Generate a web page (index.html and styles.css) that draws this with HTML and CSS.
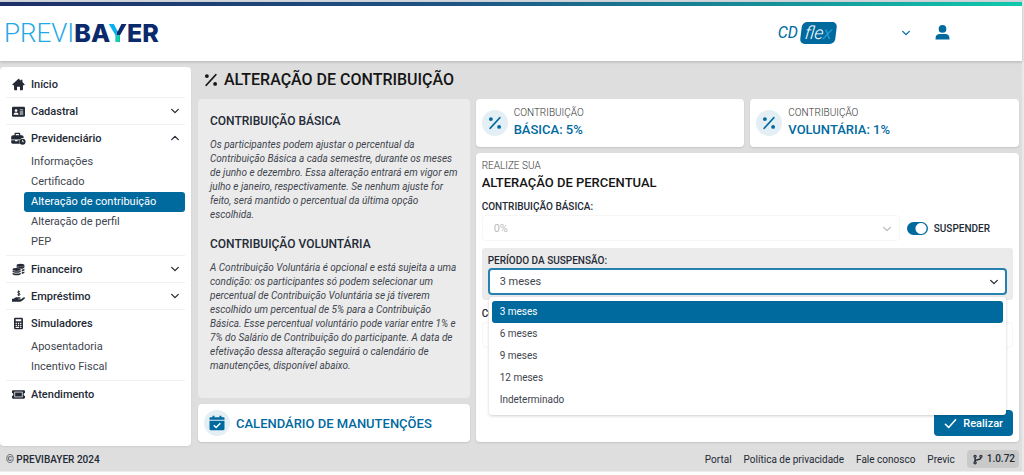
FILE: index.html
```html
<!DOCTYPE html>
<html lang="pt-BR">
<head>
<meta charset="utf-8">
<meta name="viewport" content="width=device-width, initial-scale=1">
<title>Previbayer - Alteração de contribuição</title>
<link rel="stylesheet" href="styles.css">
</head>
<body>
<svg class="sprite" aria-hidden="true">
  <symbol id="chevron" viewBox="0 0 10 10"><path d="M1.700 3.400 5 6.600l3.300-3.200" fill="none" stroke="currentColor" stroke-width="1.300" stroke-linecap="round" stroke-linejoin="round"/></symbol>
  <symbol id="percent" viewBox="0 0 16 16"><path d="M2.500 14 13.500 2" stroke="currentColor" stroke-width="2" stroke-linecap="round"/><circle cx="3.300" cy="3.500" r="2.200" fill="currentColor"/><circle cx="12.700" cy="12.500" r="2.200" fill="currentColor"/></symbol>
</svg>
<div class="page">
  <header class="header">
    <a class="logo" href="#" aria-label="Previbayer"><span class="logo-light">PREVI</span><span class="logo-bold">BA<span class="logo-y">Y</span>ER</span></a>
    <div class="account">
      <a class="plan" href="#" aria-label="CD flex"><span>CD</span><span class="plan-tag">fle<span class="plan-x">x</span></span></a>
      <button class="icon-button" type="button" aria-label="Trocar plano"><svg class="chevron"><use href="#chevron"/></svg></button>
      <button class="icon-button" type="button" aria-label="Usuário"><svg class="user" viewBox="0 0 16 16" fill="currentColor"><circle cx="8" cy="4.200" r="4.100"/><path d="M.6 15.500v-1.700c0-2.300 2-4.100 4.400-4.100h6c2.400 0 4.400 1.800 4.400 4.100v1.700z"/></svg></button>
    </div>
  </header>

  <div class="layout">
    <nav class="sidebar" aria-label="Menu principal">
      <section class="menu">
        <a class="menu-head" href="#"><svg class="menu-icon" viewBox="0 0 16 16" fill="currentColor"><path d="M8 1 .6 7.800c-.4.500-.1 1.100.5 1.100h1.400v5c0 .7.500 1.100 1.100 1.100h2.600v-4.200h3.600V15h2.600c.7 0 1.100-.4 1.100-1.100v-5h1.400c.6 0 .9-.6.500-1.100L12.800 5V2.200h-2v1.200L8.700 1.300z"/></svg><span>Início</span></a>
      </section>
      <section class="menu">
        <a class="menu-head" href="#"><svg class="menu-icon" viewBox="0 0 16 16"><rect x="0" y="2" width="16" height="12.500" rx="1.600" fill="currentColor"/><g fill="#fff"><circle cx="5" cy="6.800" r="1.700"/><path d="M2 12c0-1.800 1.200-2.700 3-2.700S8 10.200 8 12z"/><path d="M9.500 5.400h4.300v1.200H9.500zM9.500 8h4.300v1.200H9.500zM9.500 10.600h4.300v1.200H9.500z"/></g></svg><span>Cadastral</span><svg class="chevron"><use href="#chevron"/></svg></a>
      </section>
      <section class="menu">
        <a class="menu-head" href="#"><svg class="menu-icon menu-icon-wide" viewBox="0 0 18 16"><path d="M0 6.500C0 5 1 4 2.300 4H4V2.500C4 1.600 4.700 1 5.600 1h4c.9 0 1.600.6 1.600 1.500V4H13c1.300 0 2.300 1 2.300 2.300v1.300c-1.500-.3-3.200.4-4.200 1.600H0zM5.600 4h4V2.600h-4zM0 10.300h4.800v1.200h3v-1.200h2.600c-.4 1.200-.3 3 .3 4.100H1.800C.7 14.400 0 13.600 0 12.600z" fill="currentColor" fill-rule="evenodd"/><circle cx="14" cy="12" r="3.700" fill="currentColor"/><path d="M14 9.700V12h1.600" fill="none" stroke="#fff" stroke-width="1"/></svg><span>Previdenciário</span><svg class="chevron chevron-up"><use href="#chevron"/></svg></a>
        <div class="submenu">
          <a href="#">Informações</a>
          <a href="#">Certificado</a>
          <a class="active" href="#" aria-current="page">Alteração de contribuição</a>
          <a href="#">Alteração de perfil</a>
          <a href="#">PEP</a>
        </div>
      </section>
      <section class="menu">
        <a class="menu-head" href="#"><svg class="menu-icon" viewBox="0 0 16 16" fill="currentColor"><ellipse cx="10.500" cy="2.700" rx="4.800" ry="1.900"/><path d="M5.700 3.800c1.500 1.400 8.100 1.400 9.600 0v1.500c0 1.100-1.900 1.800-4 1.900-1-.9-3-1.500-5.600-1.500zM12 8.200c1.400-.1 2.600-.5 3.300-1v1.500c0 .8-1.400 1.500-3.300 1.700zM12 11.400c1.400-.1 2.600-.5 3.300-1v1.400c0 .8-1.400 1.500-3.300 1.700z"/><ellipse cx="5.700" cy="8" rx="5" ry="1.800"/><path d="M.7 9.100c1.800 1.400 8.200 1.400 10 0v1.300c0 2-10 2-10 0zM.7 12c1.800 1.400 8.200 1.400 10 0v1.600c0 2-10 2-10 0z"/></svg><span>Financeiro</span><svg class="chevron"><use href="#chevron"/></svg></a>
      </section>
      <section class="menu">
        <a class="menu-head" href="#"><svg class="menu-icon" viewBox="0 0 16 16" fill="currentColor"><path d="M9.800 2.200C8.900 1.500 7 1.400 6.900 2.700c0 1.500 3 .9 3 2.500C9.800 6.700 7.600 6.500 6.700 5.700M8.300.5v7" fill="none" stroke="currentColor" stroke-width="1.200"/><path d="M0 10.700h2.200l1.400-1.100c.6-.5 1.200-.7 1.900-.7h4.200c1.200 0 1.200 1.800 0 1.800H7.500v.6h3.600l2.900-2.100c1.200-.8 2.500.7 1.500 1.600l-3.900 3.100c-.5.400-1 .6-1.700.6H0z"/></svg><span>Empréstimo</span><svg class="chevron"><use href="#chevron"/></svg></a>
      </section>
      <section class="menu">
        <a class="menu-head" href="#"><svg class="menu-icon" viewBox="0 0 16 16"><rect x="2.500" y="1" width="11" height="14" rx="1.500" fill="currentColor"/><path d="M4.500 2.900h7v2.200h-7zM4.500 7h1.500v1.500H4.500zM7.300 7h1.500v1.500H7.300zM10 7h1.500v1.500H10zM4.500 9.600h1.500v1.500H4.500zM7.300 9.600h1.500v1.500H7.300zM10 9.600h1.500v1.500H10zM4.500 12.100h4.300v1.300H4.500zM10 12.100h1.500v1.300H10z" fill="#fff"/></svg><span>Simuladores</span></a>
        <div class="submenu">
          <a href="#">Aposentadoria</a>
          <a href="#">Incentivo Fiscal</a>
        </div>
      </section>
      <section class="menu">
        <a class="menu-head" href="#"><svg class="menu-icon" viewBox="0 0 16 16"><path d="M1.500 2.800h13c.9 0 1.500.6 1.500 1.400v2.100a1.700 1.700 0 0 0 0 3.400v2.100c0 .8-.6 1.400-1.500 1.400h-13c-.9 0-1.500-.6-1.500-1.400V9.700a1.700 1.700 0 0 0 0-3.400V4.200c0-.8.600-1.400 1.500-1.400z" fill="currentColor"/><rect x="3.400" y="5" width="9.200" height="6" fill="none" stroke="#fff" stroke-width=".9"/></svg><span>Atendimento</span></a>
      </section>
    </nav>

    <main class="main">
      <h1 class="title"><svg class="title-icon"><use href="#percent"/></svg>ALTERAÇÃO DE CONTRIBUIÇÃO</h1>
      <div class="columns">
        <div class="column">
          <article class="info">
            <h2>CONTRIBUIÇÃO BÁSICA</h2>
            <p>Os participantes podem ajustar o percentual da Contribuição Básica a cada semestre, durante os meses de junho e dezembro. Essa alteração entrará em vigor em julho e janeiro, respectivamente. Se nenhum ajuste for feito, será mantido o percentual da última opção escolhida.</p>
            <h2>CONTRIBUIÇÃO VOLUNTÁRIA</h2>
            <p>A Contribuição Voluntária é opcional e está sujeita a uma condição: os participantes só podem selecionar um percentual de Contribuição Voluntária se já tiverem escolhido um percentual de 5% para a Contribuição Básica. Esse percentual voluntário pode variar entre 1% e 7% do Salário de Contribuição do participante. A data de efetivação dessa alteração seguirá o calendário de manutenções, disponível abaixo.</p>
          </article>
          <a class="card calendar" href="#">
            <span class="badge"><svg class="badge-icon-large" viewBox="0 0 16 16"><path d="M1.500 2.200h2V.8h2v1.400h5V.8h2v1.400h2c.6 0 1 .4 1 1v1.600H.5V3.200c0-.6.400-1 1-1zM.5 5.700h15v8.400c0 .7-.5 1.200-1.200 1.200H1.700c-.7 0-1.200-.5-1.200-1.200z" fill="currentColor"/><path d="m4.800 10.300 2.300 2.200 4.200-4.200" fill="none" stroke="#fff" stroke-width="1.500"/></svg></span>
            <span>CALENDÁRIO DE MANUTENÇÕES</span>
          </a>
        </div>

        <div class="column">
          <div class="summary">
            <div class="card summary-card">
              <span class="badge"><svg class="badge-icon"><use href="#percent"/></svg></span>
              <div><div class="eyebrow">CONTRIBUIÇÃO</div><div class="value">BÁSICA: 5%</div></div>
            </div>
            <div class="card summary-card">
              <span class="badge"><svg class="badge-icon"><use href="#percent"/></svg></span>
              <div><div class="eyebrow">CONTRIBUIÇÃO</div><div class="value">VOLUNTÁRIA: 1%</div></div>
            </div>
          </div>

          <form class="card form">
            <div class="eyebrow">REALIZE SUA</div>
            <h2 class="form-title">ALTERAÇÃO DE PERCENTUAL</h2>
            <label class="label" for="basica">CONTRIBUIÇÃO BÁSICA:</label>
            <div class="row">
              <div class="field disabled">
                <select id="basica" disabled><option>0%</option></select>
                <svg class="chevron field-chevron"><use href="#chevron"/></svg>
              </div>
              <label class="toggle"><input type="checkbox" role="switch" checked>SUSPENDER</label>
            </div>
            <div class="period">
              <label class="label" for="periodo">PERÍODO DA SUSPENSÃO:</label>
              <div class="field focused">
                <select id="periodo"><option>3 meses</option><option>6 meses</option><option>9 meses</option><option>12 meses</option><option>Indeterminado</option></select>
                <svg class="chevron field-chevron"><use href="#chevron"/></svg>
                <div class="dropdown" role="listbox" aria-label="Período da suspensão">
                  <button type="button" role="option" aria-selected="true">3 meses</button>
                  <button type="button" role="option" aria-selected="false">6 meses</button>
                  <button type="button" role="option" aria-selected="false">9 meses</button>
                  <button type="button" role="option" aria-selected="false">12 meses</button>
                  <button type="button" role="option" aria-selected="false">Indeterminado</button>
                </div>
              </div>
            </div>
            <label class="label" for="voluntaria">CONTRIBUIÇÃO VOLUNTÁRIA:</label>
            <div class="field disabled">
              <select id="voluntaria" disabled></select>
            </div>
            <button class="submit" type="submit"><svg class="submit-icon" viewBox="0 0 14 14"><path d="m1.500 7.800 3.500 3.500L12.500 3" fill="none" stroke="currentColor" stroke-width="1.700" stroke-linecap="round" stroke-linejoin="round"/></svg>Realizar</button>
          </form>
        </div>
      </div>
    </main>
  </div>

  <footer class="footer">
    <span class="copyright">© PREVIBAYER 2024</span>
    <nav class="links" aria-label="Rodapé">
      <a href="#">Portal</a>
      <a href="#">Política de privacidade</a>
      <a href="#">Fale conosco</a>
      <a href="#">Previc</a>
      <span class="version"><svg class="branch" viewBox="0 0 12 12" fill="none" stroke="currentColor"><circle cx="2.500" cy="2.200" r="1.300" stroke-width="1.400"/><circle cx="9.500" cy="2.200" r="1.300" stroke-width="1.400"/><circle cx="2.500" cy="9.900" r="1.300" stroke-width="1.400"/><path d="M2.500 3.500v5M2.500 8C2.500 5.500 9.500 7.200 9.500 3.500" stroke-width="1.700"/></svg>1.0.72</span>
    </nav>
  </footer>
</div>
</body>
</html>
```
FILE: styles.css
```css
* { box-sizing: border-box; }

:root {
  --blue: #006a9f;
  --ink: #232a35;
  --grey: #dedede;
}

body {
  margin: 0;
  background: #fff;
  color: var(--ink);
  font-family: Roboto, "Liberation Sans", sans-serif;
  font-size: 11px;
}

h1, h2, p { margin: 0; }
a { color: inherit; text-decoration: none; }
button, select, input { font: inherit; color: inherit; }
button { border: 0; background: none; cursor: pointer; }
svg { display: block; flex: none; }
.sprite { position: absolute; width: 0; height: 0; }

.page {
  background: var(--grey);
  border-top: 2px solid #d3d6dc;
  border-right: 2px solid #e9e9e9;
  border-bottom: 1px solid #eee;
}

.chevron { width: 10px; height: 10px; }
.chevron-up { transform: rotate(180deg); }

/* Header */
.header {
  display: flex;
  align-items: center;
  justify-content: space-between;
  height: 59px;
  padding: 0 63px 2px 4px;
  background: #fff;
  border-top: 4px solid;
  border-image: linear-gradient(90deg, #1d2f66, #1e5585 45%, #168f98 75%, #10c9ac) 1;
  box-shadow: 0 1px 3px rgba(0, 0, 0, .2);
}
.logo { display: flex; align-items: center; font-size: 26px; line-height: 30px; }
.logo-light { font-weight: 300; color: #1fa9e6; }
.logo-bold { font-family: Inter, sans-serif; font-size: 25px; font-weight: 800; color: #0a2a6b; }
.logo-y {
  background: linear-gradient(180deg, transparent 56%, #12cfae 56%), linear-gradient(90deg, #0bb0ee 50%, #0a2a6b 50%);
  background-clip: text;
  -webkit-background-clip: text;
  color: transparent;
}
.account { display: flex; align-items: center; color: var(--blue); }
.plan {
  display: flex;
  align-items: center;
  gap: 3px;
  margin-right: 56px;
  font-size: 16px;
  font-style: italic;
}
.plan-tag {
  padding: 0 4px;
  border-radius: 5px;
  background: var(--blue);
  color: #fff;
  font-size: 18px;
  line-height: 22px;
  font-weight: 300;
  transform: skewX(-7deg);
}
.plan-x { color: #29a9e1; }
.icon-button { padding: 0 9px; }
.icon-button + .icon-button { margin-left: 6px; }
.user { width: 15px; height: 15px; }

/* Layout */
.layout { display: flex; gap: 7px; padding-top: 6px; }
.sidebar {
  flex: 0 0 191px;
  padding: 4px 6px;
  background: #fff;
  border-radius: 4px;
  box-shadow: 0 1px 2px rgba(0, 0, 0, .08);
}
.menu { border-bottom: 1px solid #f0f0f0; }
.menu:last-child { border-bottom: 0; }
.menu-head {
  display: flex;
  align-items: center;
  gap: 6px;
  height: 26px;
  padding: 0 5px 0 6px;
  font-weight: 500;
}
.menu-head .chevron { margin-left: auto; }
.menu-icon { width: 13px; height: 13px; }
.menu-icon-wide { width: 15px; margin: 0 -1px; }
.submenu { padding: 1px 0 3px; }
.submenu a {
  display: block;
  margin-left: 18px;
  padding-left: 7px;
  border-radius: 3px;
  line-height: 20px;
  color: #40454e;
}
.submenu .active { background: var(--blue); color: #fff; }

.main { flex: 1; min-width: 0; padding: 0 3px 4px 0; }
.title {
  display: flex;
  align-items: center;
  gap: 6px;
  padding: 0 6px 6px;
  font-size: 16px;
  line-height: 26px;
  font-weight: 500;
  color: #151515;
}
.title-icon { width: 14px; height: 14px; }
.columns { display: grid; grid-template-columns: 1fr 2fr; gap: 6px; }
.column { display: flex; flex-direction: column; gap: 6px; min-width: 0; }
.card { background: #fff; border-radius: 4px; box-shadow: 0 1px 2px rgba(0, 0, 0, .12); }

.info { flex: 1; padding: 14px 12px; background: #ebebeb; border-radius: 4px; }
.info h2 { font-size: 12px; line-height: 16px; font-weight: 500; }
.info p { margin: 9px 0 14px; font-size: 10px; line-height: 14px; font-style: italic; color: #40454e; }
.info p:last-child { margin-bottom: 0; }
.badge {
  display: flex;
  flex: none;
  align-items: center;
  justify-content: center;
  width: 26px;
  height: 26px;
  border-radius: 50%;
  background: #e3eff4;
  color: var(--blue);
}
.badge-icon { width: 14px; height: 14px; }
.badge-icon-large { width: 16px; height: 16px; }
.calendar {
  display: flex;
  align-items: center;
  gap: 6px;
  padding: 6px;
  font-size: 13px;
  font-weight: 500;
  color: var(--blue);
}

.summary { display: grid; grid-template-columns: 1fr 1fr; gap: 6px; }
.summary-card { display: flex; align-items: center; gap: 6px; padding: 7px 6px; }
.eyebrow { font-size: 10px; line-height: 14px; font-weight: 300; color: #333; }
.value { font-size: 13px; line-height: 20px; font-weight: 500; color: var(--blue); }

/* Form */
.form { flex: 1; padding: 6px; }
.form-title { font-size: 13px; line-height: 20px; font-weight: 500; color: #151515; }
.label { display: block; font-size: 10px; line-height: 14px; font-weight: 500; }
.form > .label { padding: 7px 0 1px; }
.row { display: flex; align-items: center; gap: 7px; padding-bottom: 7px; }
.field { position: relative; flex: 1; }
.field select {
  display: block;
  width: 100%;
  height: 26px;
  padding: 0 11px;
  border: 1px solid #ddd;
  border-radius: 4px;
  background: #fff;
  color: #40454e;
  appearance: none;
}
.field.disabled select { border-color: #f6f6f6; color: #bbb; opacity: 1; }
.field.disabled { color: #bbb; }
.field.focused select { height: 27px; border: 2px solid #2581b0; padding: 0 10px; }
.field-chevron { position: absolute; top: 9px; right: 8px; }
.toggle {
  display: flex;
  align-items: center;
  gap: 6px;
  margin-right: 23px;
  font-size: 10px;
  font-weight: 500;
}
.toggle input {
  appearance: none;
  width: 21px;
  height: 13px;
  margin: 0;
  border-radius: 7px;
  background: radial-gradient(circle at 14px 50%, #fff 5px, var(--blue) 6px);
}
.period { padding: 6px 6px 5px; background: #ebebeb; border-radius: 3px; }
.dropdown {
  position: absolute;
  z-index: 1;
  top: calc(100% + 2px);
  left: 1px;
  right: 1px;
  padding: 4px 3px;
  background: #fff;
  border-radius: 3px;
  box-shadow: 0 1px 3px rgba(0, 0, 0, .2);
}
.dropdown button {
  display: block;
  width: 100%;
  padding: 0 8px;
  border-radius: 3px;
  font-size: 10px;
  line-height: 22px;
  text-align: left;
  color: #40454e;
}
.dropdown button[aria-selected="true"] { background: var(--blue); color: #fff; }
.submit {
  display: flex;
  align-items: center;
  gap: 6px;
  height: 26px;
  margin: 62px 0 0 auto;
  padding: 0 10px;
  border-radius: 4px;
  background: var(--blue);
  color: #fff;
  font-weight: 500;
}
.submit-icon { width: 13px; height: 13px; }

/* Footer */
.footer { display: flex; justify-content: space-between; align-items: center; padding: 4px 3px 3px 6px; font-size: 10px; }
.copyright { font-weight: 500; }
.links { display: flex; align-items: center; gap: 12px; }
.version {
  display: flex;
  align-items: center;
  gap: 4px;
  padding: 0 4px 0 6px;
  border-radius: 4px;
  background: #c9c9c9;
  line-height: 18px;
  font-weight: 500;
}
.branch { width: 10px; height: 11px; }
```
